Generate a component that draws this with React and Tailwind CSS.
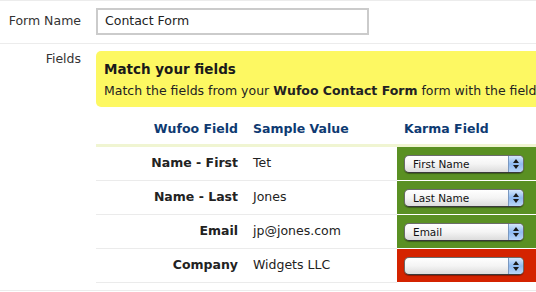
import React from "react";

const ROWS = [
  { label: "Name - First", sample: "Tet", karma: "First Name", ok: true },
  { label: "Name - Last", sample: "Jones", karma: "Last Name", ok: true },
  { label: "Email", sample: "jp@jones.com", karma: "Email", ok: true },
  { label: "Company", sample: "Widgets LLC", karma: "", ok: false },
];

const SelectBox = ({ value }) => (
  <div className="flex h-[18px] w-[120px] items-stretch overflow-hidden rounded-[5px] border border-[#6b6b6b] border-b-[#3a3a3a] bg-gradient-to-b from-white via-[#f4f4f4] to-[#dcdcdc] shadow-[0_1px_1px_rgba(0,0,0,0.35)]">
    <span className="flex-1 truncate pl-[8px] text-[10.5px] leading-[16px] text-[#111]">{value}</span>
    <span className="flex w-[15px] flex-col items-center justify-center gap-[2px] border-l border-[#7a98c0] bg-gradient-to-b from-[#d4e6fb] via-[#8fbaf0] to-[#b9d6f8]">
      <svg width="6" height="4" viewBox="0 0 6 4"><path d="M3 0L6 4H0z" fill="#1a1a1a" /></svg>
      <svg width="6" height="4" viewBox="0 0 6 4"><path d="M0 0H6L3 4z" fill="#1a1a1a" /></svg>
    </span>
  </div>
);

export default function App() {
  return (
    <div className="h-[292px] w-[536px] overflow-hidden bg-white font-['DejaVu_Sans',sans-serif] text-[12.5px] text-[#222]">
      {/* Form name */}
      <div className="flex h-[44px] border-t border-b border-[#ececec]">
        <div className="w-[96px] shrink-0 pr-[15px] pt-[11px] text-right leading-[18px] text-[#333]">Form Name</div>
        <div className="pt-[7px]">
          <div className="flex h-[27px] w-[273px] items-center border-2 border-[#cbcbcb] pl-[7px] text-[12.5px]">
            Contact Form
          </div>
        </div>
      </div>

      {/* Fields */}
      <div className="flex">
        <div className="w-[96px] shrink-0 pr-[15px] pt-[6px] text-right leading-[18px] text-[#333]">Fields</div>
        <div className="min-w-0 flex-1">
          <div className="mt-[7px] h-[56px] overflow-hidden whitespace-nowrap rounded-l-[5px] bg-[#fdf862] px-[8px] pt-[9px]">
            <div className="text-[13.5px] font-bold leading-[18px] text-[#1a1a1a]">Match your fields</div>
            <div className="mt-[4px] leading-[18px]">
              Match the fields from your <b>Wufoo Contact Form</b> form with the fields
            </div>
          </div>

          {/* table */}
          <div className="flex h-[40px] items-end border-b-[3px] border-[#f0f5d2] pb-[6px] font-bold leading-[18px] text-[#0e3a72]">
            <div className="w-[150px] shrink-0 pr-[8px] text-right">Wufoo Field</div>
            <div className="w-[151px] shrink-0 pl-[7px]">Sample Value</div>
            <div className="pl-[7px]">Karma Field</div>
          </div>
          {ROWS.map((r) => (
            <div key={r.label} className="flex h-[34px]">
              <div className="flex w-[150px] shrink-0 items-center justify-end border-b border-[#ebebeb] pr-[8px] font-bold">{r.label}</div>
              <div className="flex w-[151px] shrink-0 items-center border-b border-[#ebebeb] pl-[7px]">{r.sample}</div>
              <div className={`flex flex-1 items-center border-b border-white pl-[7px] ${r.ok ? "bg-[#5a9023]" : "bg-[#d42300]"}`}>
                <SelectBox value={r.karma} />
              </div>
            </div>
          ))}
        </div>
      </div>
      <div className="mt-[7px] border-t border-[#ececec]" />
    </div>
  );
}
